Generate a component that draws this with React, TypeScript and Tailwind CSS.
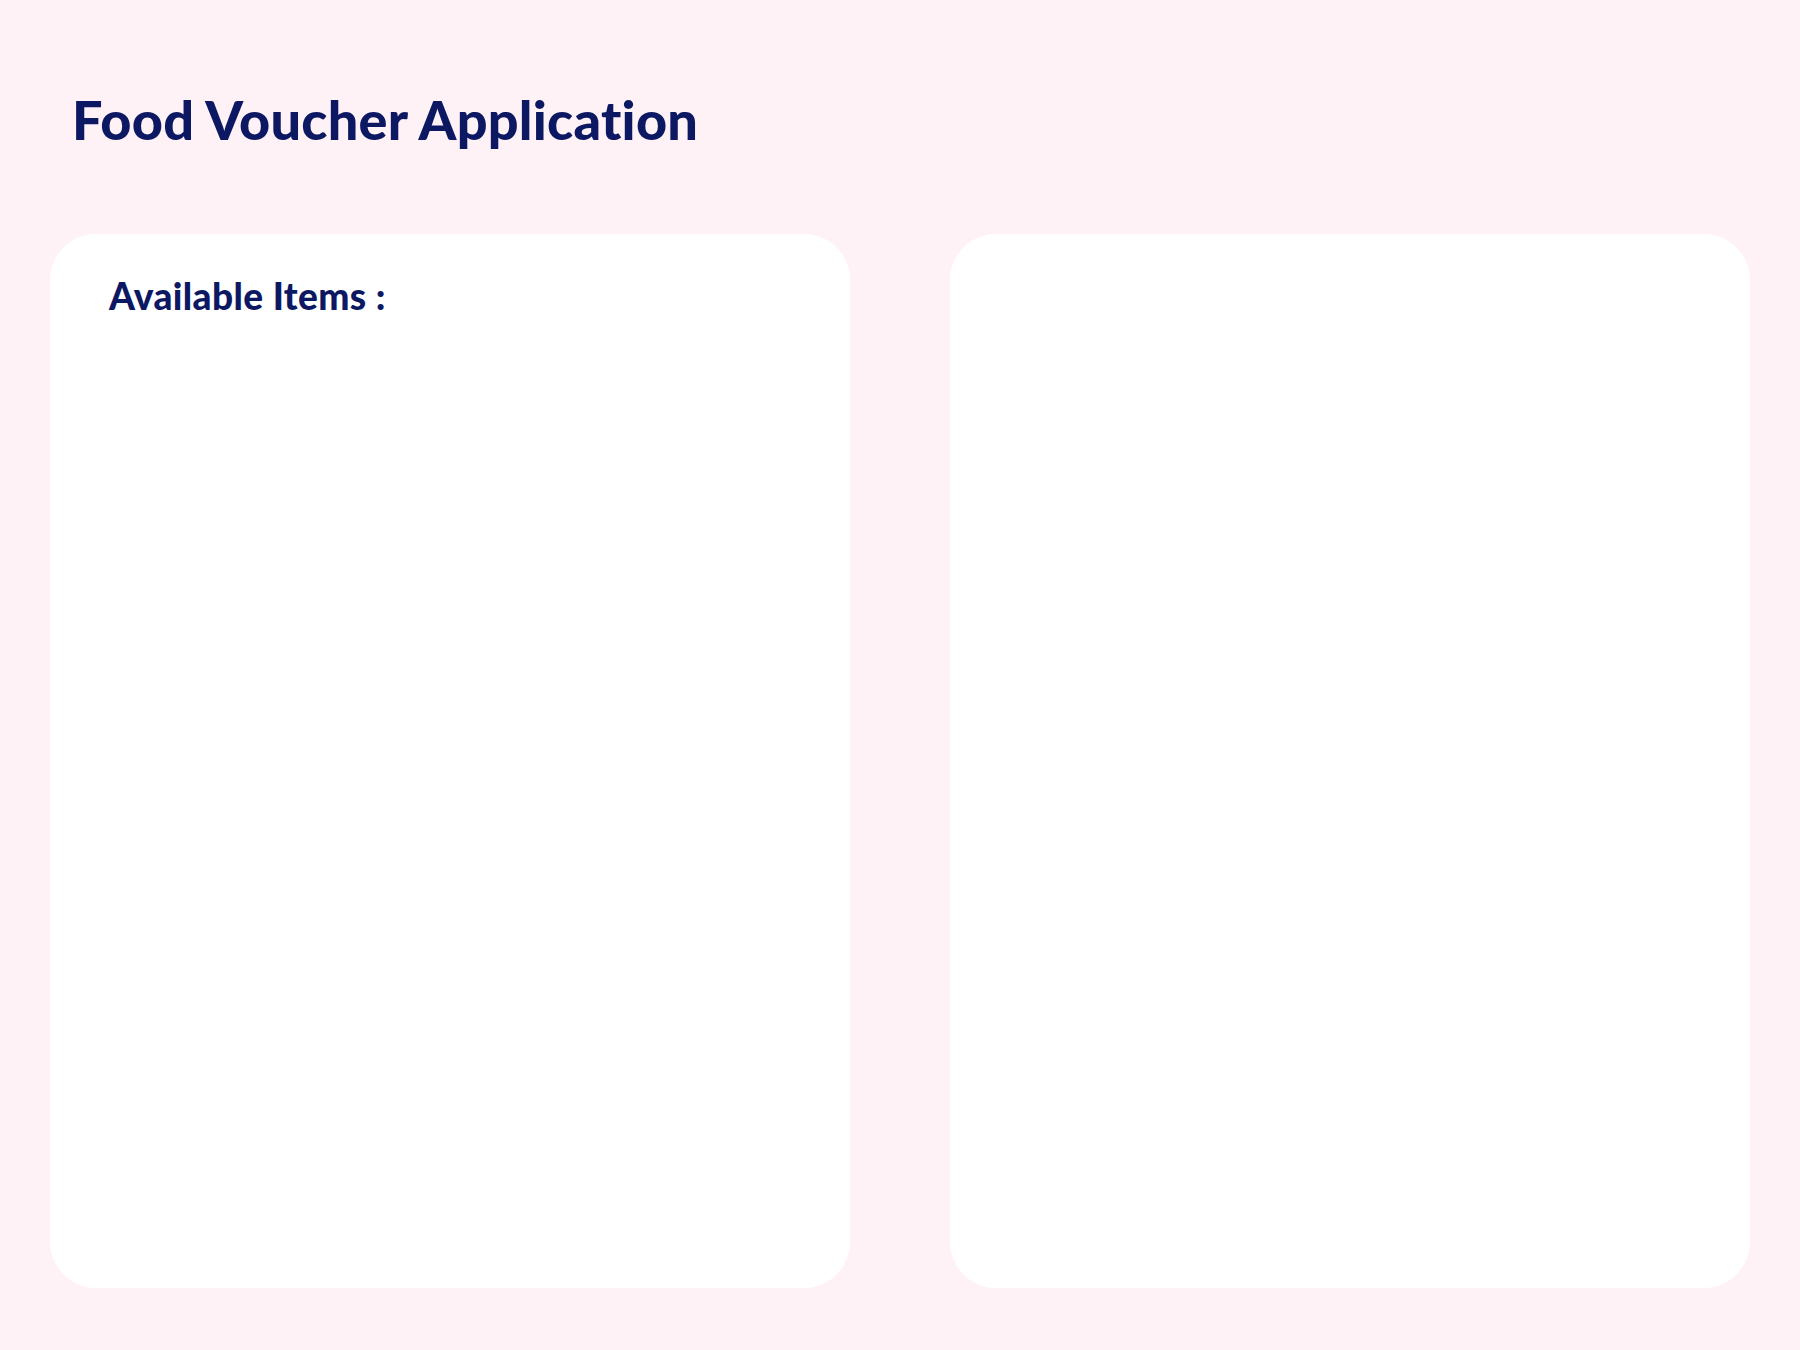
export default function App() {
  return (
    <div className="min-h-[1350px] w-full bg-[#fff2f6] px-[50px] font-['Lato',sans-serif] text-[#0d1863]">
      <div className="pl-[22px] pt-[93px] h-[234px]">
        <h1 className="text-[54px] font-black leading-none tracking-[0.25px]">Food Voucher Application</h1>
      </div>
      <div className="flex gap-[100px]">
        <div className="h-[1054px] w-[800px] rounded-[46px] bg-white px-[59px] pt-[43px]">
          <h2 className="text-[37px] font-black leading-none tracking-[0.4px]">Available Items :</h2>
        </div>
        <div className="h-[1054px] w-[800px] rounded-[46px] bg-white"></div>
      </div>
    </div>
  );
}
